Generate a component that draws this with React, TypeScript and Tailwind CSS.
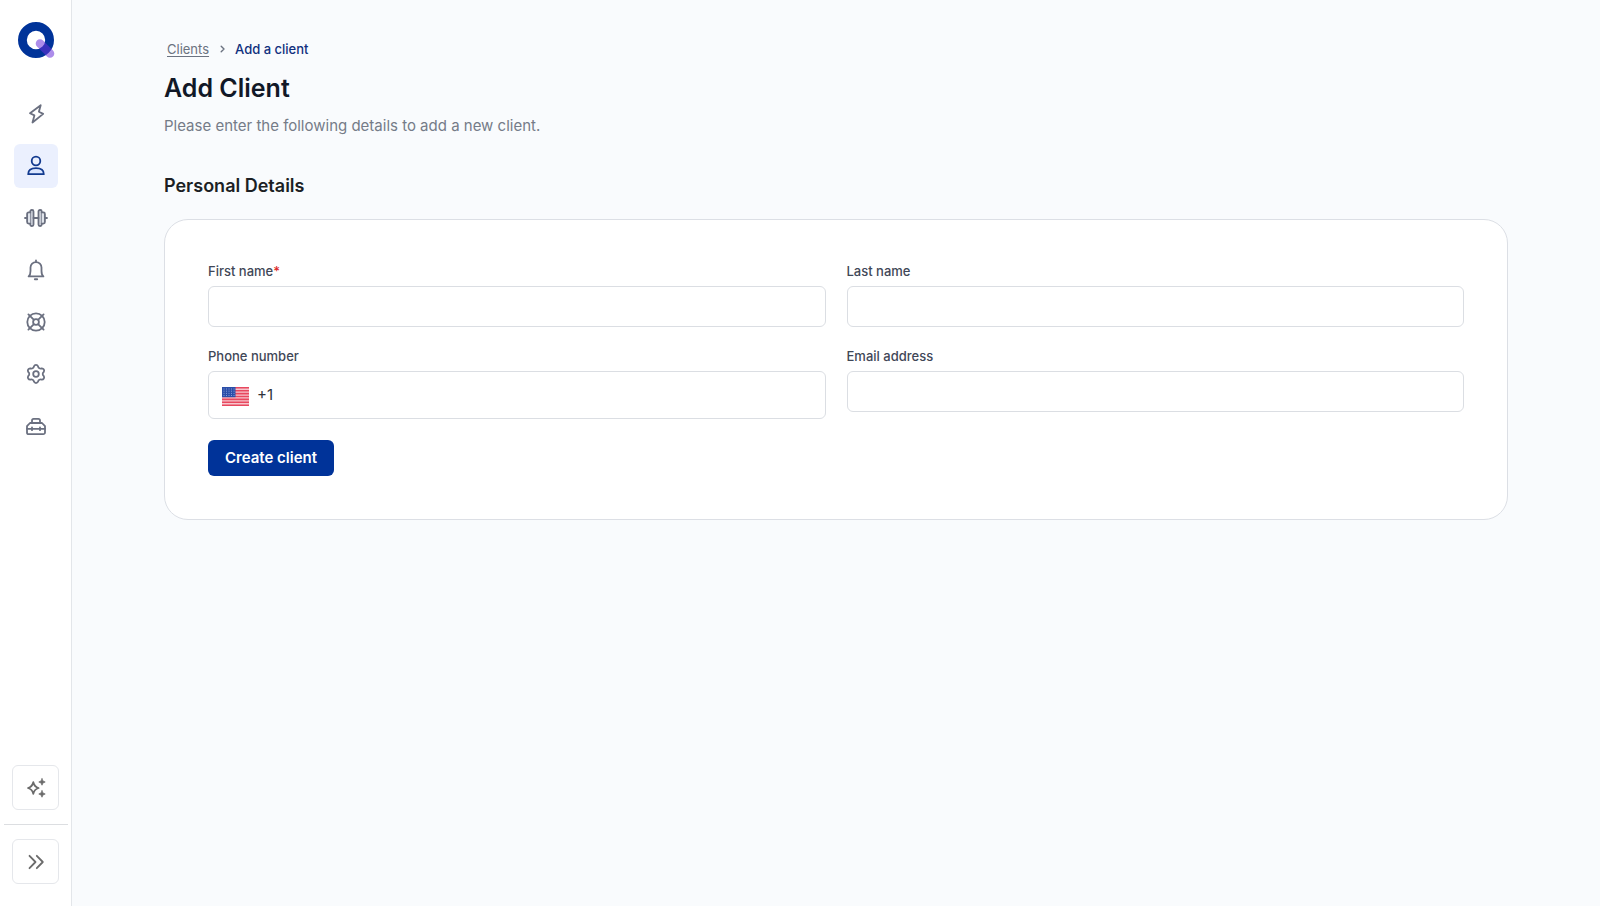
import type { ReactNode } from "react"

const navItems = [
    { label: "Activity", icon: <BoltIcon /> },
    { label: "Clients", icon: <UserIcon />, active: true },
    { label: "Workouts", icon: <DumbbellIcon /> },
    { label: "Notifications", icon: <BellIcon /> },
    { label: "Support", icon: <LifebuoyIcon /> },
    { label: "Settings", icon: <GearIcon /> },
    { label: "Toolbox", icon: <ToolboxIcon /> },
]

export default function App() {
    return (
        <div className="flex min-h-screen bg-[#f9fbfd] font-[Inter,sans-serif]">
            <Sidebar />
            <main className="flex-1 px-[92px] pt-10">
                <nav aria-label="Breadcrumb" className="flex items-center gap-[9px] pl-[3px] text-[13px] leading-[18px]">
                    <a href="#clients" className="text-[#6b7280] underline underline-offset-2">Clients</a>
                    <svg className="h-3 w-2 text-[#6b7280]" viewBox="0 0 8 12" fill="none" stroke="currentColor" strokeWidth="1.4" strokeLinecap="round" strokeLinejoin="round">
                        <path d="M3.2 3.2 6 6 3.2 8.8" />
                    </svg>
                    <span aria-current="page" className="font-medium text-[#10307e]">Add a client</span>
                </nav>
                <h1 className="mt-3 text-[25px] font-semibold leading-9 text-[#111827]">Add Client</h1>
                <p className="mt-2 text-[15px] leading-6 text-[#757c88]">Please enter the following details to add a new client.</p>
                <h2 className="mt-9 text-[18px] font-semibold leading-6 text-[#1c1f24]">Personal Details</h2>
                <ClientForm />
            </main>
        </div>
    )
}

function Sidebar() {
    return (
        <aside className="flex w-[72px] shrink-0 flex-col items-center border-r border-[#e3e6ea] bg-white py-[22px]">
            <a href="#home" aria-label="Home"><Logo /></a>
            <nav aria-label="Main" className="mt-[34px] flex flex-col gap-2">
                {navItems.map((item) => (
                    <a
                        key={item.label}
                        href={"#" + item.label.toLowerCase()}
                        aria-label={item.label}
                        className={item.active
                            ? "flex size-11 items-center justify-center rounded-md bg-[#ebf0fe] text-[#123a8f]"
                            : "flex size-11 items-center justify-center rounded-md text-[#6b7080]"}
                    >
                        {item.icon}
                    </a>
                ))}
            </nav>
            <div className="mt-auto flex w-full flex-col items-center gap-[14px]">
                <SquareButton label="Assistant"><SparklesIcon /></SquareButton>
                <hr className="w-16 border-[#dcdee1]" />
                <SquareButton label="Expand sidebar"><ChevronsIcon /></SquareButton>
            </div>
        </aside>
    )
}

function SquareButton({ label, children }: { label: string, children: ReactNode }) {
    return (
        <button type="button" aria-label={label} className="flex h-[45px] w-[47px] items-center justify-center rounded-md border border-[#e5e7eb] bg-white text-[#6b6b6b]">
            {children}
        </button>
    )
}

function ClientForm() {
    return (
        <form className="mt-[21px] rounded-3xl border border-[#dcdfe5] bg-white p-[43px]">
            <div className="grid grid-cols-2 items-start gap-[21px]">
                <Field id="first-name" label="First name" required />
                <Field id="last-name" label="Last name" />
                <div className="flex flex-col gap-[7px]">
                    <label htmlFor="phone" className="text-[13px] font-medium leading-4 text-[#3f4757]">Phone number</label>
                    <div className="flex h-12 items-center gap-2 rounded-md border border-[#dbdee3] px-[13px]">
                        <UsFlag />
                        <input id="phone" type="tel" defaultValue="+1" className="min-w-0 flex-1 text-[15px] leading-5 text-[#30343b] outline-none" />
                    </div>
                </div>
                <Field id="email" label="Email address" type="email" />
            </div>
            <button type="submit" className="mt-[21px] h-9 rounded-md bg-[#003399] px-[17px] text-[15px] font-semibold leading-5 text-white">
                Create client
            </button>
        </form>
    )
}

function Field({ id, label, type = "text", required }: { id: string, label: string, type?: string, required?: boolean }) {
    return (
        <div className="flex flex-col gap-[7px]">
            <label htmlFor={id} className="text-[13px] font-medium leading-4 text-[#3f4757]">
                {label}{required && <span className="text-[#dc2626]">*</span>}
            </label>
            <input id={id} type={type} required={required} className="h-[41px] w-full rounded-md border border-[#dbdee3] px-3 text-[15px] outline-none" />
        </div>
    )
}

function Logo() {
    return (
        <svg className="h-9 w-[39px]" viewBox="0 0 39 36" fill="none">
            <circle cx="20" cy="18" r="13.6" stroke="#003399" strokeWidth="8.8" />
            <path d="M24 21.5 34 31.5" stroke="#6a30d8" strokeOpacity=".55" strokeWidth="8.6" strokeLinecap="round" />
        </svg>
    )
}

function Icon({ children }: { children: ReactNode }) {
    return (
        <svg className="size-6" viewBox="0 0 24 24" fill="none" stroke="currentColor" strokeWidth="1.8" strokeLinecap="round" strokeLinejoin="round">
            {children}
        </svg>
    )
}

function BoltIcon() {
    return (
        <Icon>
            <path d="M16.7 3.2 6 11.2l4.4 2.2L8.500 20.500l10.700-8.600-4.300-2.200z" />
        </Icon>
    )
}

function UserIcon() {
    return (
        <Icon>
            <circle cx="12" cy="7" r="4.300" />
            <path d="M4.200 20.200c0-3.900 3.200-6 7.800-6s7.800 2.100 7.800 6z" fill="#dbe6ff" />
        </Icon>
    )
}

function DumbbellIcon() {
    return (
        <Icon>
            <rect x="6.300" y="4" width="3.200" height="16" rx="1.400" fill="#dfe3ea" />
            <rect x="14.500" y="4" width="3.200" height="16" rx="1.400" fill="#dfe3ea" />
            <path d="M6.300 6.400H4.600c-.9 0-1.500.6-1.500 1.500v8.200c0 .9.6 1.500 1.500 1.500h1.700M17.700 6.400h1.700c.9 0 1.500.6 1.500 1.500v8.200c0 .9-.6 1.500-1.500 1.500h-1.700" fill="#dfe3ea" />
            <path d="M9.500 12h5M1 12h2M21 12h2" />
        </Icon>
    )
}

function BellIcon() {
    return (
        <Icon>
            <path d="M12 2.300v1.500M4.600 18.400h14.800c-1.500-1.200-1.900-2.800-1.900-5.500V9.600a5.500 5.500 0 0 0-11 0v3.300c0 2.700-.4 4.300-1.900 5.500z" />
            <path d="M10.900 21.300h2.200" strokeWidth="2" />
        </Icon>
    )
}

function LifebuoyIcon() {
    return (
        <Icon>
            <circle cx="12" cy="12" r="8.700" />
            <circle cx="12" cy="12" r="2.900" />
            <path d="M9.700 9.700 4.400 4.400M14.300 9.700l5.300-5.300M9.700 14.300l-5.300 5.300M14.300 14.300l5.300 5.300" />
        </Icon>
    )
}

function GearIcon() {
    return (
        <Icon>
            <circle cx="12" cy="12" r="2.800" />
            <path d="M9.930 4.270A2.300 2.300 0 0 1 14.070 4.270A2.600 2.600 0 0 0 17.660 6.340A2.300 2.300 0 0 1 19.730 9.930A2.600 2.600 0 0 0 19.730 14.070A2.300 2.300 0 0 1 17.660 17.660A2.600 2.600 0 0 0 14.070 19.730A2.300 2.300 0 0 1 9.930 19.730A2.600 2.600 0 0 0 6.340 17.660A2.300 2.300 0 0 1 4.270 14.070A2.600 2.600 0 0 0 4.270 9.930A2.300 2.300 0 0 1 6.340 6.340A2.600 2.600 0 0 0 9.930 4.270z" />
        </Icon>
    )
}

function ToolboxIcon() {
    return (
        <Icon>
            <path d="M6 9h12l3 3.200v6.200a1.800 1.800 0 0 1-1.800 1.800H4.800A1.800 1.800 0 0 1 3 18.400v-6.200z" />
            <path d="M8 9V6.400A1.600 1.600 0 0 1 9.600 4.800h4.800A1.600 1.600 0 0 1 16 6.400V9M3 14.800h18M8 13.400v2.800M16 13.400v2.800" />
        </Icon>
    )
}

function SparklesIcon() {
    return (
        <Icon>
            <path d="M9.300 6.200c.8 3.400 2 4.900 5.300 5.800-3.300.9-4.500 2.400-5.300 5.800-.8-3.400-2-4.900-5.300-5.800 3.300-.9 4.500-2.400 5.300-5.800z" />
            <path d="M18 2.800c.5 2 1.200 2.700 3.200 3.200-2 .5-2.700 1.200-3.200 3.200-.5-2-1.200-2.700-3.200-3.200 2-.5 2.700-1.200 3.200-3.200zM18 14.800c.5 2 1.200 2.700 3.200 3.200-2 .5-2.700 1.200-3.200 3.200-.5-2-1.200-2.700-3.200-3.200 2-.5 2.700-1.200 3.200-3.200z" fill="currentColor" strokeWidth=".8" />
        </Icon>
    )
}

function ChevronsIcon() {
    return (
        <Icon>
            <path d="m5.500 5.800 6 6.200-6 6.200M12.800 5.800l6 6.200-6 6.200" />
        </Icon>
    )
}

function UsFlag() {
    return (
        <svg className="mt-[3px] h-[19px] w-[27px] shrink-0" viewBox="0 0 27 19">
            <rect width="27" height="19" fill="#f7c5cd" />
            <path d="M0 .8h27M0 3.700h27M0 6.600h27M0 9.500h27M0 12.400h27M0 15.300h27M0 18.200h27" stroke="#e8485f" strokeWidth="1.600" />
            <rect width="13.500" height="10.200" fill="#2b4ea8" />
            <path d="M1.500 2h11M1.500 4.200h11M1.500 6.400h11M1.500 8.500h11" stroke="#8fa5dc" strokeWidth=".9" strokeDasharray="1 1.500" />
        </svg>
    )
}
